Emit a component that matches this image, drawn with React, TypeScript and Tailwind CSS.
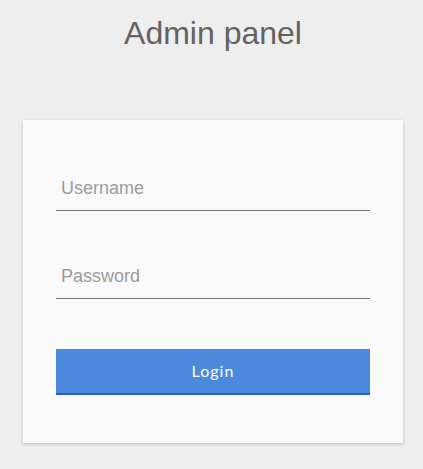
import React from "react";

export default function App() {
  return (
    <div className="min-h-[469px] w-full bg-[#eeeeee] pt-[17px] font-['Liberation_Sans',Arial,sans-serif]">
      <h1 className="pl-[3px] text-center text-[32px] leading-[32px] text-[#626262] font-normal">
        Admin panel
      </h1>
      <div className="ml-[23px] mt-[71px] w-[380px] bg-[#fafafa] px-[33px] pt-[51px] pb-[48px] shadow-[0_1px_3px_rgba(0,0,0,0.22)]">
        <form className="flex flex-col" onSubmit={(e) => e.preventDefault()}>
          <input
            type="text"
            placeholder="Username"
            className="h-[40px] w-full border-b border-[#777777] bg-transparent pl-[5px] pr-[4px] pt-0 pb-[5px] text-[18px] text-[#444] outline-none placeholder:text-[#9a9a9a]"
          />
          <input
            type="password"
            placeholder="Password"
            className="mt-[48px] h-[40px] w-full border-b border-[#777777] bg-transparent pl-[5px] pr-[4px] pt-0 pb-[5px] text-[18px] text-[#444] outline-none placeholder:text-[#9a9a9a]"
          />
          <button
            type="submit"
            className="mt-[50px] h-[46px] w-full border-b-2 border-[#2d5fc4] bg-[#4a89dc] font-['Lato',sans-serif] text-[16px] tracking-[1px] text-white"
          >
            Login
          </button>
        </form>
      </div>
    </div>
  );
}
